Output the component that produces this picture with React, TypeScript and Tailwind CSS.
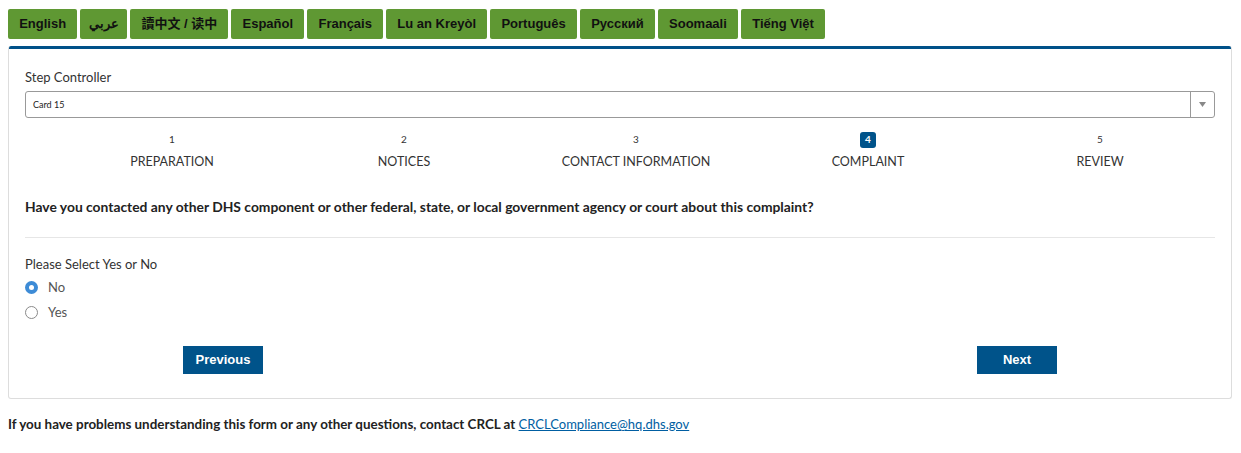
import clsx from 'clsx';

const languages = [
	'English',
	'عربي',
	'讀中文 / 读中',
	'Español',
	'Français',
	'Lu an Kreyòl',
	'Português',
	'Русский',
	'Soomaali',
	'Tiếng Việt'
];

const steps = ['PREPARATION', 'NOTICES', 'CONTACT INFORMATION', 'COMPLAINT', 'REVIEW'];
const currentStep = 4;

export default function App() {
	return (
		<div className="min-h-[453px] bg-white font-['Lato','Noto_Sans',sans-serif] text-[#333]">
			<div className="flex gap-[3px] px-[8px] pt-[9px]">
				{languages.map((lang) => (
					<button
						type="button"
						key={lang}
						className={clsx(
							"h-[30px] rounded-[2px] bg-[#5f9833] font-['Liberation_Sans','Noto_Sans_CJK_SC',sans-serif] text-[13px] font-bold text-[#111]",
							lang === 'عربي' ? 'w-[47px]' : lang === '讀中文 / 读中' ? 'w-[98px]' : 'px-[11.2px]'
						)}
					>
						{lang}
					</button>
				))}
			</div>

			<div className="mx-[8px] mt-[7px] w-[1224px] rounded-[3px] border border-t-0 border-[#ddd]">
				<div className="h-[3px] rounded-t-[2px] bg-[#005189]" />
				<div className="px-[16px] pt-[19px] pb-[24px]">
					<div className="text-[13px] leading-[18px] text-[#333]">Step Controller</div>
					<div className="mt-[5px] flex h-[27px] items-stretch rounded-[3px] border border-[#999]">
						<div className="flex flex-1 items-center pl-[7px] text-[9px] text-[#222]">Card 15</div>
						<div className="flex w-[24px] items-center justify-center border-l border-[#999]">
							<svg width="7" height="5" viewBox="0 0 7 5">
								<path d="M0 0h7L3.5 5z" fill="#888" />
							</svg>
						</div>
					</div>

					<div className="mt-[13px] ml-[31px] grid w-[1160px] grid-cols-5">
						{steps.map((step, i) => (
							<div key={step} className="flex flex-col items-center">
								<div className="flex h-[17px] items-center">
									<span
										className={clsx(
											'flex h-[16px] min-w-[16px] items-center justify-center rounded-[3px] text-[10px]',
											i + 1 === currentStep
												? 'bg-[#00538a] font-bold text-white'
												: 'text-[#333]'
										)}
									>
										{i + 1}
									</span>
								</div>
								<div className="mt-[5px] text-[12.5px] leading-[18px] text-[#333]">
									{step}
								</div>
							</div>
						))}
					</div>

					<div className="mt-[26px] text-[13.85px] font-bold leading-[20px] text-[#222]">
						Have you contacted any other DHS component or other federal, state, or local
						government agency or court about this complaint?
					</div>
					<div className="mt-[20px] border-t border-[#e6e6e6]" />

					<div className="mt-[17px] text-[13px] leading-[18px] text-[#333]">
						Please Select Yes or No
					</div>
					<label className="mt-[4px] flex items-center gap-[10px] text-[13px] leading-[20px] text-[#555]">
						<span className="flex h-[13px] w-[13px] items-center justify-center rounded-full bg-[#3d8bd6]">
							<span className="h-[5px] w-[5px] rounded-full bg-white" />
						</span>
						No
					</label>
					<label className="mt-[5px] flex items-center gap-[10px] text-[13px] leading-[20px] text-[#555]">
						<span className="h-[13px] w-[13px] rounded-full border border-[#8a8a8a] bg-white" />
						Yes
					</label>

					<div className="mt-[24px] flex">
						<button
							type="button"
							className="ml-[158px] h-[28px] w-[80px] bg-[#00538a] font-['Liberation_Sans',sans-serif] text-[13px] font-bold text-white"
						>
							Previous
						</button>
						<button
							type="button"
							className="ml-[714px] h-[28px] w-[80px] bg-[#00538a] font-['Liberation_Sans',sans-serif] text-[13px] font-bold text-white"
						>
							Next
						</button>
					</div>
				</div>
			</div>

			<div className="mt-[15px] px-[8px] text-[13.4px] font-bold text-[#222]">
				If you have problems understanding this form or any other questions, contact CRCL at{' '}
				<a href="#" className="text-[13px] font-normal text-[#005ea2] underline">
					CRCLCompliance@hq.dhs.gov
				</a>
			</div>
		</div>
	);
}
